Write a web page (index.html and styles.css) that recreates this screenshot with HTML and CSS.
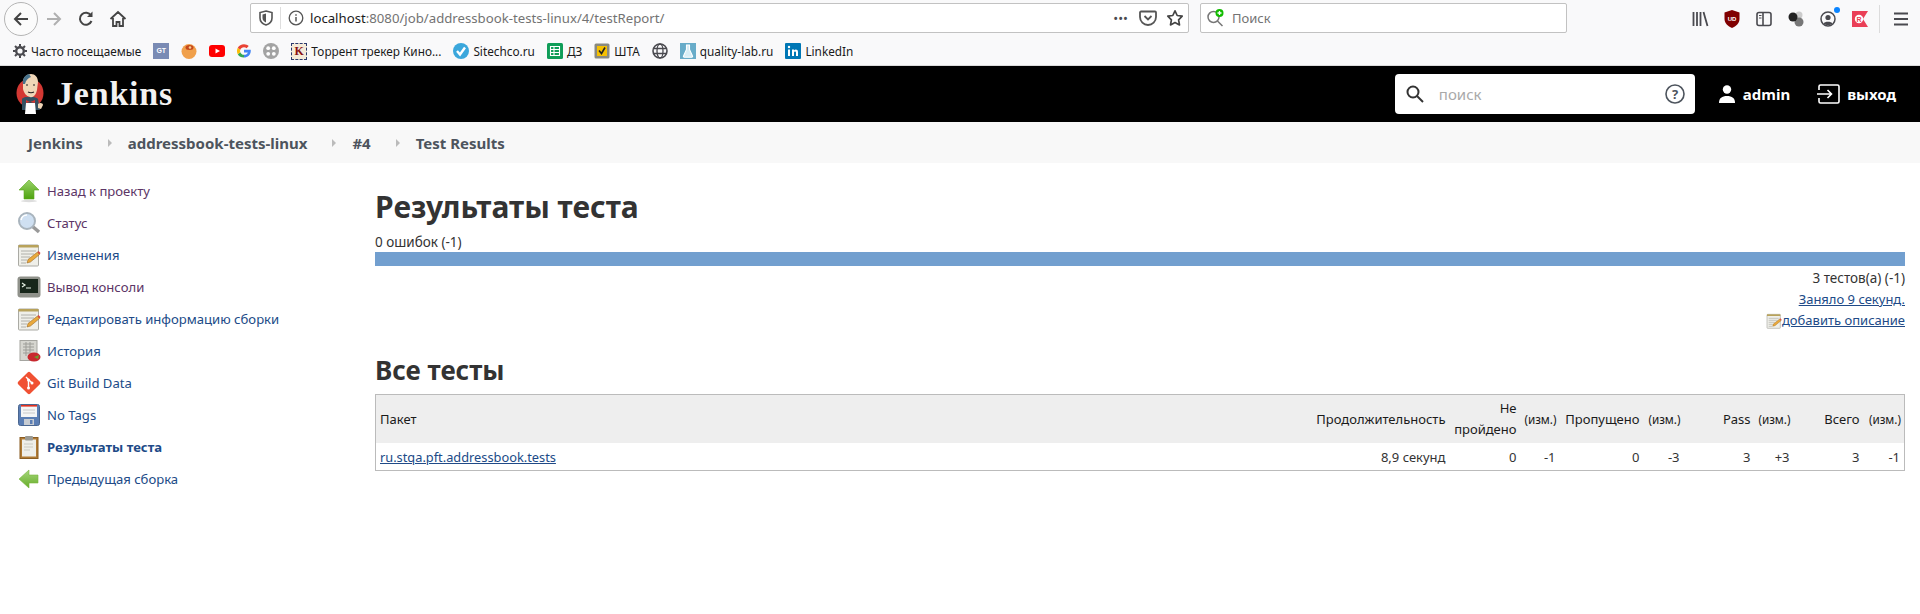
FILE: index.html
```html
<!DOCTYPE html>
<html lang="en">
<head>
    <meta charset="UTF-8">
    <meta name="viewport" content="width=device-width, initial-scale=1.0">
    <title>Test Results</title>
    <link rel="stylesheet" href="styles.css">
</head>
<body>
    <svg class="defs" width="0" height="0">
        <defs>
            <linearGradient id="up-green" x1="0" y1="0" x2="0" y2="1">
                <stop offset="0" stop-color="#9ad36a"/>
                <stop offset="1" stop-color="#4ea30f"/>
            </linearGradient>
            <linearGradient id="back-green" x1="0" y1="0" x2="0" y2="1">
                <stop offset="0" stop-color="#a5d67c"/>
                <stop offset="1" stop-color="#66ad28"/>
            </linearGradient>
        </defs>
        <symbol id="note" viewBox="0 0 24 24">
            <rect x="1.500" y="2" width="20" height="21" rx="1" fill="#efefe9" stroke="#aaaaa4"/>
            <rect x="1.500" y="2" width="20" height="2.500" fill="#b8a25a"/>
            <path d="M4 8h15M4 11h13M4 14h9M4 17h6M4 20h5" stroke="#b0b0aa" fill="none"/>
            <path d="M10 20l1-3.500L20.500 9l2 2.500-9 7.500z" fill="#e9a93c" stroke="#8c5a1c" stroke-width=".5"/>
            <path d="M20.500 9l2 2.500 1-1.500-2-2z" fill="#d8483c"/>
        </symbol>
    </svg>

    <div class="browser">
        <div class="toolbar">
            <div class="nav-buttons">
                <span class="back-btn">
                    <svg width="18" height="18" viewBox="0 0 18 18"><path d="M16 9H3M9 3L3 9l6 6" fill="none" stroke="#444" stroke-width="2"/></svg>
                </span>
                <span class="tool-btn">
                    <svg width="18" height="18" viewBox="0 0 18 18"><path d="M2 9h13M9 3l6 6-6 6" fill="none" stroke="#b0b0b0" stroke-width="2"/></svg>
                </span>
                <span class="tool-btn">
                    <svg width="18" height="18" viewBox="0 0 18 18"><path d="M14.500 11A6 6 0 1 1 14 5.500" fill="none" stroke="#444" stroke-width="2"/><path d="M15.500 1.500V7H10z" fill="#444"/></svg>
                </span>
                <span class="tool-btn">
                    <svg width="18" height="18" viewBox="0 0 18 18"><path d="M1.500 9L9 2l7.500 7M4 8v8h3.500v-4h3v4H14V8" fill="none" stroke="#444" stroke-width="1.800"/></svg>
                </span>
            </div>
            <div class="urlbar">
                <svg class="url-shield" width="16" height="16" viewBox="0 0 16 16"><path d="M8 1l6 1.500V8c0 3.500-3 6-6 7-3-1-6-3.500-6-7V2.500z" fill="none" stroke="#555" stroke-width="1.600"/><path d="M8 3.500v9C6 11.500 4.500 10 4.500 8V4.500z" fill="#555"/></svg>
                <span class="url-divider"></span>
                <svg class="url-info" width="16" height="16" viewBox="0 0 16 16"><circle cx="8" cy="8" r="6.800" fill="none" stroke="#555" stroke-width="1.300"/><path d="M8 7v4.500M8 4.200v1.500" stroke="#555" stroke-width="1.500"/></svg>
                <span class="url-text">localhost<span class="url-rest">:8080/job/addressbook-tests-linux/4/testReport/</span></span>
                <span class="url-dots">•••</span>
                <svg class="url-pocket" width="18" height="18" viewBox="0 0 18 18"><path d="M2 2.500h14a1 1 0 0 1 1 1V8a8 8 0 0 1-16 0V3.500a1 1 0 0 1 1-1z" fill="none" stroke="#555" stroke-width="1.800"/><path d="M5.500 7L9 10.500 12.500 7" fill="none" stroke="#555" stroke-width="1.800"/></svg>
                <svg class="url-star" width="18" height="18" viewBox="0 0 18 18"><path d="M9 1.800l2.200 4.700 5 .7-3.600 3.600.9 5.100L9 13.500l-4.500 2.400.9-5.100L1.800 7.200l5-.7z" fill="none" stroke="#444" stroke-width="1.700" stroke-linejoin="round"/></svg>
            </div>
            <div class="searchbar">
                <span class="search-engine">
                    <svg width="20" height="20" viewBox="0 0 20 20"><circle cx="7.500" cy="9" r="5.500" fill="none" stroke="#777" stroke-width="1.500"/><path d="M11.500 13l5 5" stroke="#777" stroke-width="1.500"/><circle cx="13.500" cy="5" r="4" fill="#12bc00"/><path d="M11.500 5h4M13.500 3v4" stroke="#fff" stroke-width="1.300"/></svg>
                </span>
                <span>Поиск</span>
            </div>
            <div class="tool-icons">
                <span class="tool-icon">
                    <svg width="17" height="16" viewBox="0 0 17 16"><path d="M1.500 1v14M5 1v14M8.500 1v14M11.500 1l4 14" fill="none" stroke="#4a4a4f" stroke-width="1.800"/></svg>
                </span>
                <span class="tool-icon">
                    <svg width="16" height="18" viewBox="0 0 16 18"><path d="M8 0l7.500 2.500V9c0 4-3.500 7.500-7.500 9C4 16.500.5 13 .5 9V2.500z" fill="#800000"/><text x="8" y="10.500" class="ublock-text">UD</text></svg>
                </span>
                <span class="tool-icon">
                    <svg width="16" height="16" viewBox="0 0 16 16"><rect x="1" y="1.500" width="14" height="13" rx="2" fill="none" stroke="#4a4a4f" stroke-width="1.600"/><path d="M7 2v12" stroke="#4a4a4f" stroke-width="1.600"/><path d="M3 4.500h2.500M3 7h2.500" stroke="#4a4a4f"/></svg>
                </span>
                <span class="tool-icon">
                    <svg width="18" height="18" viewBox="0 0 18 18"><circle cx="12" cy="5" r="3.500" fill="#ccc"/><circle cx="12" cy="12" r="4.500" fill="#777"/><circle cx="6" cy="7" r="4.500" fill="#222"/></svg>
                </span>
                <span class="tool-icon account">
                    <svg width="16" height="16" viewBox="0 0 16 16"><circle cx="8" cy="8" r="7" fill="none" stroke="#4a4a4f" stroke-width="1.500"/><circle cx="8" cy="6.500" r="2.600" fill="#4a4a4f"/><path d="M3.500 12.500c1-2.500 8-2.500 9 0-2 2-7 2-9 0z" fill="#4a4a4f"/></svg>
                    <span class="account-dot"></span>
                </span>
                <span class="tool-icon">
                    <svg width="16" height="16" viewBox="0 0 16 16"><path d="M0 0h16l-5 8 5 8H0z" fill="#ea3f57"/><circle cx="7" cy="8" r="4.200" fill="#fff"/><text x="7" y="10.500" class="rec-text">R</text></svg>
                </span>
                <span class="tool-sep"></span>
                <span class="tool-icon">
                    <svg width="16" height="14" viewBox="0 0 16 14"><path d="M1 1.500h14M1 7h14M1 12.500h14" stroke="#4a4a4f" stroke-width="2"/></svg>
                </span>
            </div>
        </div>
        <div class="bookmarks">
            <span class="bookmark">
                <svg width="14" height="14" viewBox="0 0 14 14"><circle cx="7" cy="7" r="3.800" fill="none" stroke="#4a4a4f" stroke-width="2.400"/><path d="M7 0v2.500M7 11.500V14M0 7h2.500M11.500 7H14M2 2l1.800 1.800M10.200 10.200L12 12M12 2l-1.800 1.800M3.800 10.200L2 12" stroke="#4a4a4f" stroke-width="2"/></svg>
                Часто посещаемые
            </span>
            <span class="bookmark">
                <span class="gt-icon">GT</span>
            </span>
            <span class="bookmark">
                <svg width="16" height="16" viewBox="0 0 16 16"><circle cx="8" cy="8.500" r="7.500" fill="#f0a04b"/><ellipse cx="8.500" cy="4.500" rx="4" ry="2.500" fill="#c6481c"/><circle cx="9" cy="4.500" r="1.300" fill="#f8d090"/></svg>
            </span>
            <span class="bookmark">
                <svg width="16" height="12" viewBox="0 0 16 12"><rect width="16" height="12" rx="3" fill="#f00"/><path d="M6.500 3.500L11 6l-4.500 2.500z" fill="#fff"/></svg>
            </span>
            <span class="bookmark">
                <svg width="14" height="14" viewBox="0 0 14 14"><path d="M13.700 5.700H7v2.700h3.800c-.4 1.300-1.700 2.400-3.800 2.400v2.800c4 0 7.300-3 6.700-7.900z" fill="#4285f4"/><path d="M7 10.800c-1.800 0-3.200-1.100-3.700-2.600L.8 10.300C2 12.500 4.300 13.700 7 13.600z" fill="#34a853"/><path d="M3.300 8.200c-.3-.8-.3-1.600 0-2.400L.8 3.700c-1.100 2.100-1.100 4.500 0 6.600z" fill="#fbbc05"/><path d="M3.300 5.800C3.800 4.300 5.200 3.200 7 3.200c1 0 1.900.4 2.600 1L11.700 2.100C10.500 1 8.900.3 7 .3 4.300.3 2 1.600.8 3.700z" fill="#ea4335"/></svg>
            </span>
            <span class="bookmark">
                <svg width="16" height="16" viewBox="0 0 16 16"><circle cx="8" cy="8" r="8" fill="#a3a3a3"/><circle cx="5.200" cy="5.200" r="1.900" fill="#fff"/><circle cx="10.800" cy="5.200" r="1.900" fill="#fff"/><circle cx="5.200" cy="10.800" r="1.900" fill="#fff"/><circle cx="10.800" cy="10.800" r="1.900" fill="#fff"/></svg>
            </span>
            <span class="bookmark">
                <span class="k-icon">K</span>
                Торрент трекер Кино...
            </span>
            <span class="bookmark">
                <svg width="16" height="16" viewBox="0 0 16 16"><circle cx="8" cy="8" r="8" fill="#3ba7dc"/><path d="M4 8l3 3.500L12 4.500" fill="none" stroke="#fff" stroke-width="2.400"/></svg>
                Sitechco.ru
            </span>
            <span class="bookmark">
                <svg width="16" height="16" viewBox="0 0 16 16"><rect width="16" height="16" rx="1.500" fill="#0f9d58"/><path d="M3.500 3.500h9v9h-9zM3.500 6.500h9M3.500 9.500h9M7 3.500v9" fill="none" stroke="#fff" stroke-width="1.100"/></svg>
                ДЗ
            </span>
            <span class="bookmark">
                <svg width="16" height="16" viewBox="0 0 16 16"><rect x=".5" y=".5" width="15" height="15" rx="1.500" fill="#8a8a80"/><rect x="3" y="3" width="10" height="10" fill="#f6c000"/><path d="M5 7.500l2.500 3L11 4.500" fill="none" stroke="#222" stroke-width="1.600"/></svg>
                ШТА
            </span>
            <span class="bookmark">
                <svg width="16" height="16" viewBox="0 0 16 16"><circle cx="8" cy="8" r="7" fill="none" stroke="#4a4a4f" stroke-width="1.600"/><ellipse cx="8" cy="8" rx="3" ry="7" fill="none" stroke="#4a4a4f" stroke-width="1.300"/><path d="M1.500 5.500h13M1.500 10.500h13" stroke="#4a4a4f" stroke-width="1.300"/></svg>
            </span>
            <span class="bookmark">
                <svg width="16" height="16" viewBox="0 0 16 16"><rect width="16" height="16" fill="#68acc9"/><path d="M6 2h4M6.500 2v4.500L3.500 13a.8.8 0 0 0 .7 1.200h7.600a.8.8 0 0 0 .7-1.200L9.500 6.500V2" fill="#d8eef6" stroke="#fff" stroke-width="1.100"/></svg>
                quality-lab.ru
            </span>
            <span class="bookmark">
                <svg width="16" height="16" viewBox="0 0 16 16"><rect width="16" height="16" rx="1" fill="#0077b5"/><path d="M3 6.500h2V13H3zM7 6.500h2v1c1-1.500 4-1.500 4 1.500v4h-2V9.500c0-1.300-2-1.300-2 0V13H7z" fill="#fff"/><circle cx="4" cy="4" r="1.200" fill="#fff"/></svg>
                LinkedIn
            </span>
        </div>
    </div>

    <header class="page-header">
        <a class="logo">
            <svg width="30" height="40" viewBox="0 0 30 40">
                <ellipse cx="15" cy="19" rx="13.500" ry="14.500" fill="#d33833"/>
                <path d="M7 25c1-3 14-3 16 0l2 11H7z" fill="#335061"/>
                <path d="M8 8c0-5 4-8 8-8s7 3 7 8l-1 8c-1 5-4 8-7 7-4-1-6-4-7-8z" fill="#f0d6b7"/>
                <path d="M8 10C7 5 10 1 14 0l2 3c-3 1-5 3-6 7z" fill="#49728b"/>
                <path d="M11 11h2M18 11h2M13 18c2 1 4 1 6 0" stroke="#231f20" stroke-width="1.200" fill="none"/>
                <path d="M11 26l4 2 5-2v3l-5-1-4 1z" fill="#d33833"/>
                <path d="M11 29h9l1 11H10z" fill="#fff"/>
                <path d="M23 30c2-2 5-1 5 1l-2 4-3-1z" fill="#f0d6b7"/>
            </svg>
            <span class="logo-text">Jenkins</span>
        </a>
        <div class="header-search">
            <svg width="18" height="18" viewBox="0 0 18 18"><circle cx="7" cy="7" r="5.500" fill="none" stroke="#333" stroke-width="2"/><path d="M11 11l6 6" stroke="#333" stroke-width="2"/></svg>
            <span class="header-search-text">поиск</span>
            <svg class="help-icon" width="20" height="20" viewBox="0 0 20 20"><circle cx="10" cy="10" r="9" fill="none" stroke="#4d545d" stroke-width="1.600"/><text x="10" y="15" class="help-mark">?</text></svg>
        </div>
        <a class="header-link user-link">
            <svg width="18" height="18" viewBox="0 0 18 18"><circle cx="9" cy="4.500" r="4.200" fill="#fff"/><path d="M1 18c0-5 3-7 8-7s8 2 8 7z" fill="#fff"/></svg>
            admin
        </a>
        <a class="header-link exit-link">
            <svg width="24" height="20" viewBox="0 0 24 20"><path d="M2 6V2.500A1.500 1.500 0 0 1 3.500 1h17A1.500 1.500 0 0 1 22 2.500v15a1.500 1.500 0 0 1-1.500 1.500h-17A1.500 1.500 0 0 1 2 17.500V14" fill="none" stroke="#fff" stroke-width="1.600"/><path d="M0 10h14M10.500 6l4 4-4 4" fill="none" stroke="#fff" stroke-width="1.600"/></svg>
            выход
        </a>
    </header>

    <nav class="breadcrumbs">
        <a>Jenkins</a><span class="crumb-arrow"></span>
        <a>addressbook-tests-linux</a><span class="crumb-arrow"></span>
        <a>#4</a><span class="crumb-arrow"></span>
        <a>Test Results</a>
    </nav>

    <div class="layout">
        <aside class="side-panel">
            <a class="task visited">
                <svg width="24" height="24" viewBox="0 0 24 24"><path d="M12 1L22 11h-5v9H7v-9H2z" fill="url(#up-green)" stroke="#5aa81c" stroke-width=".6"/><ellipse cx="12" cy="22" rx="8" ry="1.200" fill="#ddd"/></svg>
                Назад к проекту
            </a>
            <a class="task visited">
                <svg width="24" height="24" viewBox="0 0 24 24"><path d="M15 15l7 6" stroke="#999" stroke-width="3.500"/><circle cx="10" cy="10" r="8" fill="#cfe0f2" stroke="#a9b4bd" stroke-width="2"/><path d="M4 9a6 6 0 0 1 6-5" stroke="#fff" stroke-width="1.600" fill="none"/></svg>
                Статус
            </a>
            <a class="task"><svg width="24" height="24"><use href="#note"/></svg>Изменения</a>
            <a class="task visited">
                <svg width="24" height="24" viewBox="0 0 24 24"><rect x=".5" y="1.500" width="23" height="21" rx="3" fill="#8f918a"/><rect x="3" y="4" width="18" height="14" fill="#17261a"/><path d="M5 8l3 2-3 2M9 13h5" fill="none" stroke="#e6f2e4" stroke-width="1.200"/></svg>
                Вывод консоли
            </a>
            <a class="task"><svg width="24" height="24"><use href="#note"/></svg>Редактировать информацию сборки</a>
            <a class="task">
                <svg width="24" height="24" viewBox="0 0 24 24"><rect x="3" y="1.500" width="17" height="20" fill="#d6d6d0" stroke="#a5a5a0"/><path d="M6 5h11M6 8h11M6 11h11M6 14h6M9 3v14M13 3v14" stroke="#9d9d98"/><ellipse cx="17" cy="18" rx="6.500" ry="4.500" fill="#c8282e"/><path d="M17 18l5-2-1 4z" fill="#6d9a2e"/></svg>
                История
            </a>
            <a class="task">
                <svg width="24" height="24" viewBox="0 0 24 24"><rect x="3.500" y="3.500" width="17" height="17" rx="2" transform="rotate(45 12 12)" fill="#f05133"/><path d="M9 6l6 6M11.500 9v8" stroke="#fff" stroke-width="1.400"/><circle cx="11.500" cy="9" r="1.500" fill="#fff"/><circle cx="15" cy="12" r="1.500" fill="#fff"/><circle cx="11.500" cy="17" r="1.500" fill="#fff"/></svg>
                Git Build Data
            </a>
            <a class="task">
                <svg width="24" height="24" viewBox="0 0 24 24"><rect x="1.500" y="1.500" width="21" height="21" rx="2" fill="#5b7eb4" stroke="#4a6690"/><rect x="4" y="2" width="16" height="12" fill="#f5f5f5"/><path d="M4 2.800h16" stroke="#e03020" stroke-width="1.600"/><path d="M6 7h12M6 10h12" stroke="#c9c9c9"/><rect x="7" y="16" width="10" height="6" fill="#c8ccd2"/><rect x="13" y="17" width="2.500" height="4" fill="#5b7eb4"/></svg>
                No Tags
            </a>
            <a class="task current">
                <svg width="24" height="24" viewBox="0 0 24 24"><rect x="3" y="2.500" width="18" height="21" fill="#b07a34" stroke="#8a5c22"/><rect x="5" y="4.500" width="14" height="17" fill="#eeeeea"/><rect x="8" y="1" width="8" height="4.500" rx="1" fill="#9a9a94"/><path d="M7 9h9M7 12h9M7 15h6" stroke="#d6d6d0" stroke-width="1.500"/></svg>
                Результаты теста
            </a>
            <a class="task">
                <svg width="24" height="24" viewBox="0 0 24 24"><path d="M2 12L12 3v5h9v8h-9v5z" fill="url(#back-green)" stroke="#79b63e" stroke-width=".6"/></svg>
                Предыдущая сборка
            </a>
        </aside>

        <main class="main-panel">
            <h1>Результаты теста</h1>
            <div class="fail-count">0 ошибок (-1)</div>
            <div class="progress-bar"></div>
            <div class="summary">
                <div class="total-count">3 тестов(а) (-1)</div>
                <div><a class="link">Заняло 9 секунд.</a></div>
                <div class="add-desc"><svg width="16" height="16"><use href="#note"/></svg><a class="link">добавить описание</a></div>
            </div>
            <h2>Все тесты</h2>
            <table class="results">
                <colgroup>
                    <col>
                    <col class="col-duration">
                    <col class="col-fail">
                    <col class="col-diff">
                    <col class="col-skip">
                    <col class="col-diff-wide">
                    <col class="col-pass">
                    <col class="col-diff">
                    <col class="col-total">
                    <col class="col-diff-last">
                </colgroup>
                <thead>
                    <tr>
                        <th class="left">Пакет</th>
                        <th>Продолжительность</th>
                        <th>Не пройдено</th>
                        <th class="diff">(изм.)</th>
                        <th>Пропущено</th>
                        <th class="diff">(изм.)</th>
                        <th>Pass</th>
                        <th class="diff">(изм.)</th>
                        <th>Всего</th>
                        <th class="diff">(изм.)</th>
                    </tr>
                </thead>
                <tbody>
                    <tr>
                        <td class="left"><a class="link pkg-link">ru.stqa.pft.addressbook.tests</a></td>
                        <td>8,9 секунд</td>
                        <td>0</td>
                        <td>-1</td>
                        <td>0</td>
                        <td>-3</td>
                        <td>3</td>
                        <td>+3</td>
                        <td>3</td>
                        <td>-1</td>
                    </tr>
                </tbody>
            </table>
        </main>
    </div>
</body>
</html>
```

FILE: styles.css
```css
html, body {
    margin: 0;
    padding: 0;
    height: 100%;
    overflow: hidden;
}
body {
    font-family: "Noto Sans", "Open Sans", sans-serif;
    font-size: 13px;
    color: #333;
    background: #fff;
}
a {
    text-decoration: none;
}
.defs {
    display: block;
    height: 0;
}

/* browser chrome */
.browser {
    height: 65px;
    background: #f9f9fa;
    border-bottom: 1px solid #dcdcdc;
}
.toolbar {
    display: flex;
    align-items: center;
    height: 37px;
    padding-left: 4px;
}
.nav-buttons {
    display: flex;
    align-items: center;
    width: 246px;
}
.back-btn {
    display: flex;
    align-items: center;
    justify-content: center;
    width: 34px;
    height: 34px;
    border: 1px solid #b5b5b5;
    border-radius: 50%;
    background: #fbfbfb;
    box-sizing: border-box;
}
.tool-btn {
    display: flex;
    justify-content: center;
    width: 32px;
}
.urlbar, .searchbar {
    display: flex;
    align-items: center;
    height: 30px;
    background: #fff;
    border: 1px solid #c2c2c2;
    border-radius: 2px;
    box-sizing: border-box;
}
.urlbar {
    width: 939px;
    padding: 0 4px 0 7px;
    margin-top: -2px;
}
.url-divider {
    width: 1px;
    height: 22px;
    background: #dedede;
    margin: 0 6px;
}
.url-info {
    margin: 0 6px 0 1px;
}
.url-text {
    font-size: 13.200px;
    color: #1a1a1a;
    flex: 1;
}
.url-rest {
    color: #737373;
}
.url-dots {
    font-size: 13px;
    color: #4a4a4f;
    margin-right: 11px;
}
.url-pocket {
    margin-right: 9px;
}
.searchbar {
    width: 367px;
    margin: -2px 0 0 11px;
    padding-left: 5px;
    gap: 6px;
    color: #737373;
    font-size: 13px;
}
.search-engine {
    display: flex;
}
.tool-icons {
    display: flex;
    align-items: center;
    margin-left: 117px;
}
.tool-icon {
    position: relative;
    display: flex;
    justify-content: center;
    width: 32px;
}
.tool-sep {
    width: 1px;
    height: 28px;
    background: #dcdcdc;
    margin: 0 5px 0 3px;
}
.account-dot {
    position: absolute;
    top: -4px;
    right: 4px;
    width: 6px;
    height: 6px;
    border-radius: 50%;
    background: #0a84ff;
}
.ublock-text {
    font: bold 6px "Liberation Sans", sans-serif;
    fill: #fff;
    text-anchor: middle;
}
.rec-text {
    font: bold 7px "Liberation Sans", sans-serif;
    fill: #ea3f57;
    text-anchor: middle;
}
.bookmarks {
    display: flex;
    align-items: center;
    height: 28px;
    padding-left: 13px;
    gap: 12px;
    font-size: 11.800px;
    color: #1a1a1a;
}
.bookmark {
    display: flex;
    align-items: center;
    gap: 4px;
    white-space: nowrap;
}
.gt-icon {
    width: 16px;
    height: 16px;
    background: #7a8bb4;
    color: #fff;
    font: bold 7px/16px "Liberation Sans", sans-serif;
    text-align: center;
}
.k-icon {
    width: 14px;
    height: 15px;
    background: #f4ead8;
    border: 1px dashed #2a3a6e;
    color: #8a1010;
    font: bold 12px/15px "Liberation Serif", serif;
    text-align: center;
}

/* jenkins header */
.page-header {
    display: flex;
    align-items: center;
    height: 56px;
    background: #000;
    padding-left: 15px;
    color: #fff;
}
.logo {
    display: flex;
    align-items: center;
    gap: 11px;
    margin-right: auto;
}
.logo-text {
    font: bold 34px "Liberation Serif", serif;
    color: #f2f2f2;
    letter-spacing: .8px;
}
.header-search {
    display: flex;
    align-items: center;
    width: 300px;
    height: 40px;
    background: #fff;
    border-radius: 4px;
    padding: 0 10px 0 11px;
    box-sizing: border-box;
}
.header-search-text {
    margin-left: 15px;
    font-size: 15px;
    color: #a9a9a9;
    flex: 1;
}
.help-mark {
    font: bold 13px "Noto Sans", sans-serif;
    fill: #4d545d;
    text-anchor: middle;
}
.header-link {
    display: flex;
    align-items: center;
    gap: 7px;
    margin-right: 24px;
    font-size: 15px;
    font-weight: bold;
    color: #fff;
}
.user-link {
    margin-left: 23px;
    margin-right: 27px;
}
.exit-link {
    gap: 6px;
}

/* breadcrumbs */
.breadcrumbs {
    display: flex;
    align-items: center;
    height: 41px;
    padding-left: 28px;
    background: #f8f8f8;
    font-size: 15px;
    font-weight: bold;
}
.breadcrumbs a {
    color: #4d545d;
}
.crumb-arrow {
    width: 0;
    height: 0;
    border-left: 4px solid #bbb;
    border-top: 4px solid transparent;
    border-bottom: 4px solid transparent;
    margin: 0 16px 0 25px;
}

/* content */
.layout {
    display: flex;
}
.side-panel {
    width: 375px;
    flex-shrink: 0;
    padding: 12px 0 0 17px;
    box-sizing: border-box;
}
.task {
    display: flex;
    align-items: center;
    gap: 6px;
    height: 32px;
    font-size: 13.100px;
    color: #204a87;
}
.task.visited {
    color: #5c3566;
}
.task.current {
    font-weight: bold;
}
.main-panel {
    flex: 1;
    padding: 24px 15px 0 0;
}
h1 {
    margin: 0;
    font-size: 30px;
    line-height: 40px;
    font-weight: bold;
    color: #333;
}
.fail-count {
    font-size: 13.500px;
    line-height: 19px;
    margin-top: 6px;
}
.progress-bar {
    height: 14px;
    background: #729fcf;
}
.summary {
    text-align: right;
    font-size: 13px;
    line-height: 21px;
    margin-top: 2px;
}
.total-count {
    font-size: 13.500px;
}
.add-desc {
    display: flex;
    justify-content: flex-end;
    align-items: center;
}
.link {
    color: #204a87;
    text-decoration: underline;
}
h2 {
    margin: 22px 0 0;
    font-size: 26px;
    line-height: 34px;
    font-weight: bold;
    color: #333;
}
.results {
    width: 100%;
    margin-top: 7px;
    table-layout: fixed;
    border-collapse: collapse;
    border: 1px solid #bbb;
    font-size: 13px;
}
.results th {
    background: #eee;
    height: 48px;
    padding: 0 4px;
    font-weight: normal;
    text-align: right;
    line-height: 21px;
    color: #1a1a1a;
}
.results td {
    height: 27px;
    padding: 0 4px;
    text-align: right;
    color: #333;
}
.results th.diff {
    font-size: 11.700px;
    padding: 0 3px 0 0;
}
.results .left {
    text-align: left;
    padding-left: 4px;
}
.pkg-link {
    font-size: 12.800px;
}
.col-duration { width: 138px; }
.col-fail { width: 71px; }
.col-diff { width: 39px; }
.col-skip { width: 84px; }
.col-diff-wide { width: 40px; }
.col-pass { width: 71px; }
.col-total { width: 70px; }
.col-diff-last { width: 41px; }
```
